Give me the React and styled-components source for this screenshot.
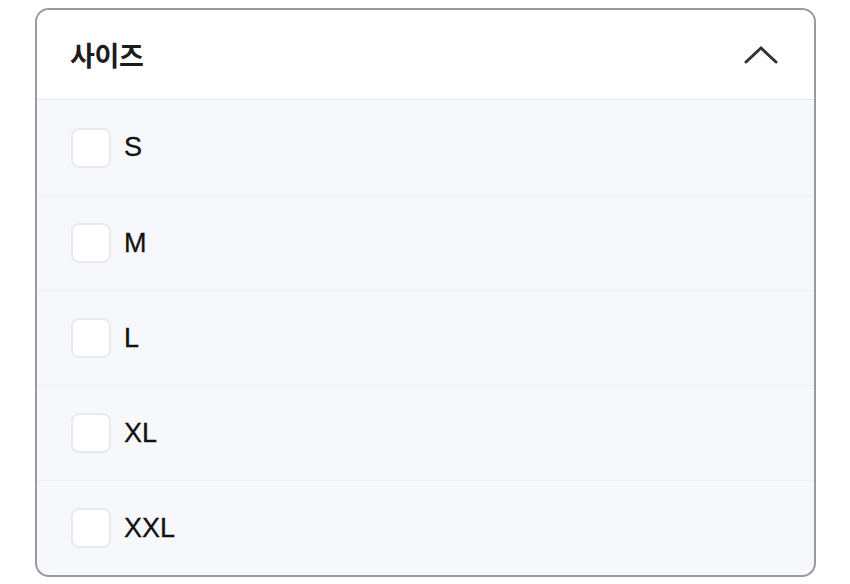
import React, { useState } from "react";
import styled, { createGlobalStyle } from "styled-components";

const Global = createGlobalStyle`
  html, body { margin: 0; padding: 0; background: #ffffff; }
  body { font-family: "Liberation Sans", "Noto Sans CJK KR", Arial, sans-serif; }
`;

const Page = styled.div`
  padding: 8px 34px 0 35px;
`;

const Panel = styled.div`
  width: 777px;
  border: 2px solid #9a9a9c;
  border-radius: 14px;
  overflow: hidden;
  background: #f7f8fb;
`;

const Header = styled.div`
  height: 89px;
  display: flex;
  align-items: center;
  justify-content: space-between;
  padding: 0 36px 0 33px;
  background: #ffffff;
  border-bottom: 1px solid #e4e6ea;
`;

const Title = styled.span`
  font-family: "Noto Sans CJK KR", sans-serif;
  font-size: 27px;
  font-weight: 700;
  color: #1c1c1e;
  letter-spacing: -0.3px;
`;

const Row = styled.label`
  height: 95px;
  box-sizing: border-box;
  display: flex;
  align-items: center;
  gap: 13px;
  padding-left: 34px;
  border-top: ${(p) => (p.$first ? "none" : "1px solid #eceef2")};
  cursor: pointer;
`;

const Box = styled.span`
  width: 40px;
  height: 40px;
  box-sizing: border-box;
  border: 2px solid #e9eaee;
  border-radius: 8px;
  background: ${(p) => (p.$checked ? "#222" : "#ffffff")};
`;

const Label = styled.span`
  font-family: "Liberation Sans", Arial, sans-serif;
  font-size: 27px;
  color: #111111;
  -webkit-text-stroke: 0.3px #111111;
`;

const sizes = ["S", "M", "L", "XL", "XXL"];

export default function App() {
  const [checked, setChecked] = useState({});
  return (
    <>
      <Global />
      <Page>
        <Panel>
          <Header>
            <Title>사이즈</Title>
            <svg width="34" height="20" viewBox="0 0 34 20" fill="none">
              <path d="M2 17 L17 3 L32 17" stroke="#333" strokeWidth="3" strokeLinecap="round" strokeLinejoin="miter" />
            </svg>
          </Header>
          {sizes.map((s, i) => (
            <Row key={s} $first={i === 0} onClick={() => setChecked({ ...checked, [s]: !checked[s] })}>
              <Box $checked={!!checked[s]} />
              <Label>{s}</Label>
            </Row>
          ))}
        </Panel>
      </Page>
    </>
  );
}
